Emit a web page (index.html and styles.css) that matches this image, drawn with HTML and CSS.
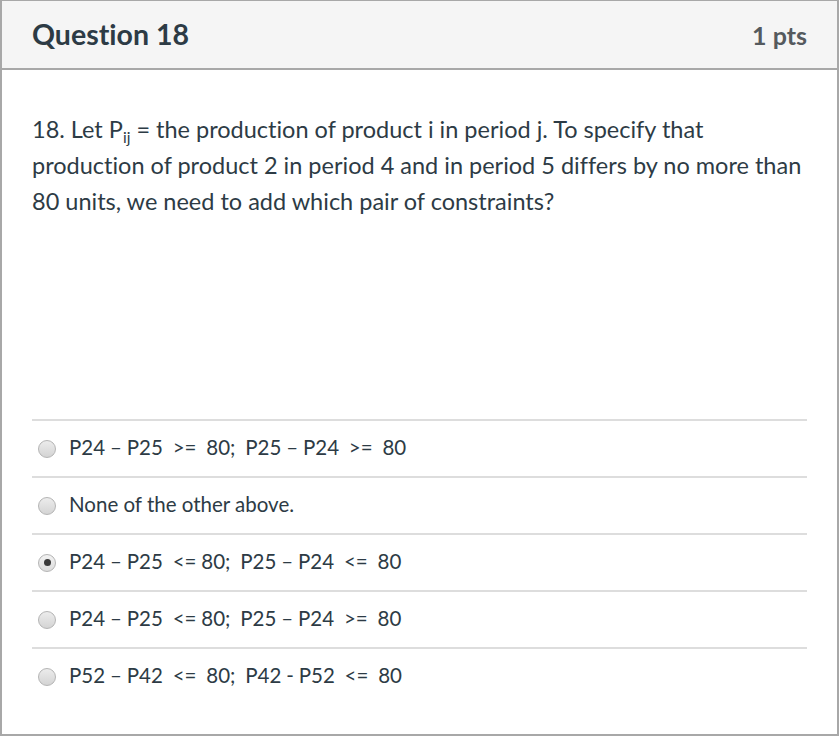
FILE: index.html
```html
<!DOCTYPE html>
<html lang="en">
<head>
<meta charset="utf-8">
<title>Question 18</title>
<link rel="stylesheet" href="styles.css">
</head>
<body>
<div class="question">
  <div class="header">
    <h2 class="title">Question 18</h2>
    <span class="points">1 pts</span>
  </div>
  <div class="content">
    <p class="text">18. Let P<sub>ij</sub> = the production of product i in period j. To specify that<br>production of product 2 in period 4 and in period 5 differs by no more than<br>80 units, we need to add which pair of constraints?</p>
    <div class="answers">
      <label class="answer"><span class="radio"></span><span class="label formula">P24 – P25&nbsp; &gt;=&nbsp; 80;&nbsp; P25 – P24&nbsp; &gt;=&nbsp; 80</span></label>
      <label class="answer"><span class="radio"></span><span class="label">None of the other above.</span></label>
      <label class="answer"><span class="radio checked"></span><span class="label formula">P24 – P25&nbsp; &lt;= 80;&nbsp; P25 – P24&nbsp; &lt;=&nbsp; 80</span></label>
      <label class="answer"><span class="radio"></span><span class="label formula">P24 – P25&nbsp; &lt;= 80;&nbsp; P25 – P24&nbsp; &gt;=&nbsp; 80</span></label>
      <label class="answer"><span class="radio"></span><span class="label formula">P52 – P42&nbsp; &lt;=&nbsp; 80;&nbsp; P42 - P52&nbsp; &lt;=&nbsp; 80</span></label>
    </div>
  </div>
</div>
</body>
</html>
```

FILE: styles.css
```css
html, body {
  margin: 0;
  padding: 0;
  background: #ffffff;
}

body {
  font-family: Lato, "Open Sans", "Liberation Sans", sans-serif;
  font-variant-ligatures: none;
  color: #2d3b45;
}

.question {
  box-sizing: border-box;
  width: 839px;
  height: 736px;
  border-top: 1px solid #a8a8a8;
  border-left: 2px solid #a8a8a8;
  border-right: 2px solid #a8a8a8;
  border-bottom: 2px solid #a8a8a8;
  display: flex;
  flex-direction: column;
}

.header {
  box-sizing: border-box;
  height: 69px;
  background: #f5f5f5;
  border-bottom: 2px solid #a8a8a8;
  padding: 0 30px;
  display: flex;
  align-items: center;
  justify-content: space-between;
}

.title {
  margin: 0;
  font-size: 28.5px;
  font-weight: 700;
  color: #2d3b45;
  line-height: 1;
}

.points {
  font-size: 25px;
  font-weight: 700;
  color: #555a5e;
  line-height: 1;
  padding-top: 2px;
}

.content {
  padding: 41px 30px 0;
}

.text {
  margin: 0;
  font-size: 23.5px;
  line-height: 36px;
  height: 308px;
  white-space: nowrap;
}

.text sub {
  font-size: 15.5px;
  line-height: 0;
  vertical-align: -5px;
}

.answers {
  display: flex;
  flex-direction: column;
}

.answer {
  height: 55px;
  border-top: 2px solid #dddddd;
  display: flex;
  align-items: center;
  gap: 13px;
  padding-left: 6px;
  font-size: 20.5px;
  color: #2d3b45;
}

.radio {
  width: 16px;
  height: 16px;
  border-radius: 50%;
  border: 1px solid #b4b4b4;
  background: linear-gradient(#ececec, #d4d4d4);
  display: flex;
  align-items: center;
  justify-content: center;
  flex-shrink: 0;
}

.radio.checked {
  background: linear-gradient(#f2f2f2, #dcdcdc);
}

.radio.checked::after {
  content: "";
  width: 7px;
  height: 7px;
  border-radius: 50%;
  background: #3a3a3a;
}

.label {
  line-height: 24px;
  padding-bottom: 4px;
}

.formula {
  word-spacing: -0.35px;
}
```
